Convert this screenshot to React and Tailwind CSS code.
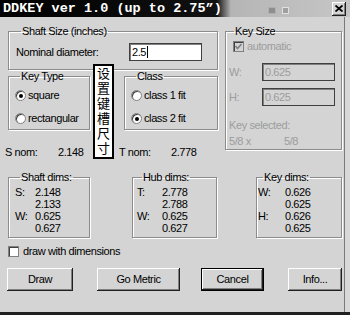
import React from "react";

const Group = ({ title, className = "", children }) => (
  <fieldset className={`border border-[#8c8c8c] shadow-[inset_1px_1px_0_#fff,1px_1px_0_#fff] ${className}`}>
    <legend className="ml-[5px] px-[1px] leading-[13px]">{title}</legend>
    {children}
  </fieldset>
);

const Radio = ({ checked, label }) => (
  <div className="flex items-center h-[13px]">
    <span className="w-[11px] h-[11px] rounded-full bg-white border border-[#808080] shadow-[inset_1px_1px_0_#404040] flex items-center justify-center">
      {checked && <span className="w-[4px] h-[4px] rounded-full bg-black" />}
    </span>
    <span className="ml-[2px]">{label}</span>
  </div>
);

const Button = ({ label, className = "" }) => (
  <div
    className={`h-[23px] flex items-center justify-center bg-[#d4d4d4] shadow-[inset_-1px_-1px_0_#202020,inset_1px_1px_0_#fff,inset_-2px_-2px_0_#808080] ${className}`}
  >
    {label}
  </div>
);

const DimRows = ({ rows, labelW }) => (
  <div className="leading-[12px] pt-[2px] pb-[3px]">
    {rows.map(([k, v], i) => (
      <div key={i} className="flex">
        <span style={{ width: labelW }}>{k}</span>
        <span>{v}</span>
      </div>
    ))}
  </div>
);

export default function App() {
  return (
    <div className="relative w-[350px] h-[315px] overflow-hidden bg-[#d4d4d4] text-black text-[11px] leading-[13px] tracking-[-0.4px] font-['Liberation_Sans',Arial,sans-serif] shadow-[inset_0_-3px_0_#202020,inset_-5px_0_0_#d8d8d8,inset_-6px_0_0_#7a7a7a]">
      {/* title bar */}
      <div className="h-[17px] flex items-center bg-[linear-gradient(to_right,#000_0%,#111_62%,#b5b5b5_66%,#c6c6c6_100%)]">
        <span className="ml-[3px] text-white text-[13.5px] leading-[17px] tracking-normal font-bold font-['Liberation_Mono',monospace] whitespace-nowrap">
          DDKEY ver 1.0 (up to 2.75”)
        </span>
        <span className="ml-auto w-[8px] h-[7px] bg-[#8e8e8e] border border-[#b0b0b0] mt-[3px]" />
        <span className="ml-[6px] w-[7px] h-[7px] bg-[#a0a0a0] border border-[#e0e0e0] mt-[3px]" />
        <span className="ml-[43px] mr-[4px] w-[14px] h-[14px] bg-[#d4d4d4] flex items-center justify-center shadow-[inset_-1px_-1px_0_#202020,inset_1px_1px_0_#fff,inset_-2px_-2px_0_#808080]">
          <svg width="8" height="7" viewBox="0 0 8 7">
            <path d="M0.5 0.5 L7.5 6.5 M7.5 0.5 L0.5 6.5" stroke="#000" strokeWidth="1.8" />
          </svg>
        </span>
      </div>

      {/* top section */}
      <div className="flex pl-[8px] pt-[8px]">
        <div className="w-[210px]">
          <Group title="Shaft Size (inches)" className="pt-[5px] pb-[8px] pl-[7px]">
            <div className="flex items-center">
              <span className="w-[113px]">Nominal diameter:</span>
              <div className="w-[73px] h-[18px] bg-white border border-[#404040] shadow-[inset_1px_1px_0_#808080] flex items-center pl-[2px]">
                2.5<span className="ml-[1px] w-[1px] h-[12px] bg-black" />
              </div>
            </div>
          </Group>
          <div className="flex">
            <Group title="Key Type" className="w-[82px] pt-[6px] pb-[4px] pl-[6px]">
              <Radio checked label="square" />
              <div className="mt-[10px]">
                <Radio label="rectangular" />
              </div>
            </Group>
            <Group title="Class" className="ml-[34px] w-[94px] pt-[6px] pb-[4px] pl-[6px]">
              <Radio label="class 1 fit" />
              <div className="mt-[10px]">
                <Radio checked label="class 2 fit" />
              </div>
            </Group>
          </div>
          <div className="flex mt-[16px] -ml-[3px]">
            <span className="w-[53px]">S nom:</span>
            <span className="w-[61px]">2.148</span>
            <span className="w-[52px]">T nom:</span>
            <span>2.778</span>
          </div>
        </div>

        <Group title="Key Size" className="self-start ml-[7px] w-[117px] pl-[3px] pb-[1px]">
          <div className="flex items-center ml-[4px] mt-[2px] h-[13px] text-[#9c9c9c]">
            <span className="w-[11px] h-[11px] bg-[#d4d4d4] border border-[#808080] shadow-[inset_1px_1px_0_#404040] flex items-center justify-center">
              <svg width="7" height="7" viewBox="0 0 7 7">
                <path d="M0.5 3 L2.5 5.5 L6.5 1" stroke="#808080" strokeWidth="1.6" fill="none" />
              </svg>
            </span>
            <span className="ml-[3px]">automatic</span>
          </div>
          <div className="flex items-center mt-[10px] text-[#9c9c9c]">
            <span className="w-[33px]">W:</span>
            <div className="w-[73px] h-[18px] border border-[#404040] shadow-[inset_1px_1px_0_#808080] flex items-center pl-[2px]">0.625</div>
          </div>
          <div className="flex items-center mt-[7px] text-[#9c9c9c]">
            <span className="w-[33px]">H:</span>
            <div className="w-[73px] h-[18px] border border-[#404040] shadow-[inset_1px_1px_0_#808080] flex items-center pl-[2px]">0.625</div>
          </div>
          <div className="mt-[13px] text-[#9c9c9c]">Key selected:</div>
          <div className="flex mt-[3px] text-[#9c9c9c]">
            <span className="w-[55px]">5/8 x</span>
            <span>5/8</span>
          </div>
        </Group>
      </div>

      {/* dims */}
      <div className="flex pl-[8px] mt-[12px]">
        <Group title="Shaft dims:" className="w-[82px] pl-[6px]">
          <DimRows labelW={20} rows={[["S:", "2.148"], ["", "2.133"], ["W:", "0.625"], ["", "0.627"]]} />
        </Group>
        <Group title="Hub dims:" className="ml-[42px] w-[85px] pl-[4px]">
          <DimRows labelW={25} rows={[["T:", "2.778"], ["", "2.788"], ["W:", "0.625"], ["", "0.627"]]} />
        </Group>
        <Group title="Key dims:" className="ml-[39px] w-[86px] pl-[1px]">
          <DimRows labelW={27} rows={[["W:", "0.626"], ["", "0.625"], ["H:", "0.626"], ["", "0.625"]]} />
        </Group>
      </div>

      {/* checkbox */}
      <div className="flex items-center pl-[8px] mt-[7px] h-[13px]">
        <span className="w-[11px] h-[11px] bg-white border border-[#808080] shadow-[inset_1px_1px_0_#404040]" />
        <span className="ml-[4px]">draw with dimensions</span>
      </div>

      {/* buttons */}
      <div className="flex pl-[7px] mt-[10px]">
        <Button label="Draw" className="w-[66px]" />
        <Button label="Go Metric" className="ml-[24px] w-[83px]" />
        <Button label="Cancel" className="ml-[21px] w-[63px] border border-black" />
        <Button label="Info..." className="ml-[24px] w-[54px]" />
      </div>

      {/* annotation overlay */}
      <div className="absolute left-[93px] top-[64px] w-[21px] h-[95px] bg-white border-2 border-black flex justify-center pt-[1px]">
        <span className="[writing-mode:vertical-rl] [text-orientation:upright] text-[13px] leading-[17px] tracking-[2px] font-['Noto_Sans_CJK_SC',sans-serif]">
          设置键槽尺寸
        </span>
      </div>
    </div>
  );
}
